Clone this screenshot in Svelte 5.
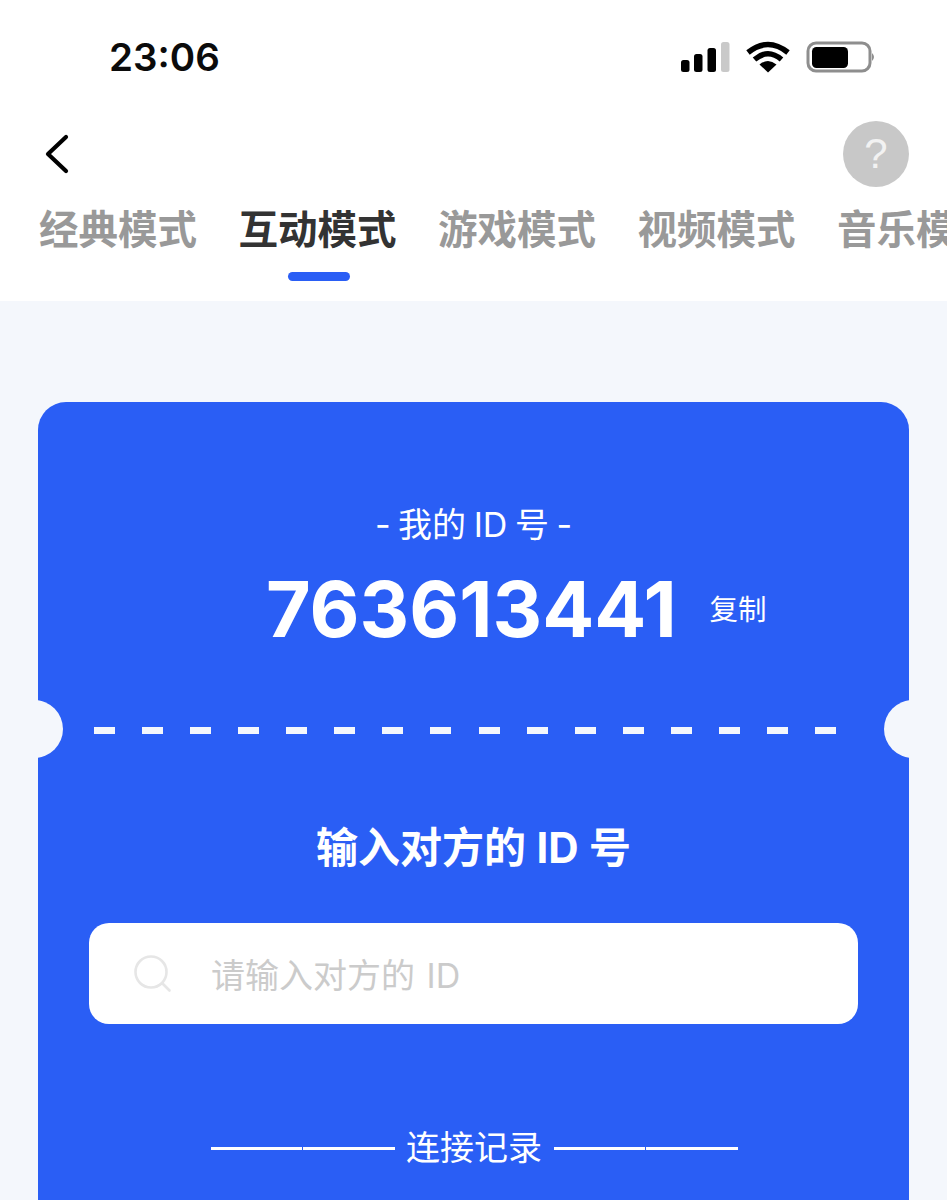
<script>
  const tabs = ['经典模式', '互动模式', '游戏模式', '视频模式', '音乐模式'];
  const active = 1;
</script>

<div class="page">
  <header class="head">
    <div class="status">
      <span class="time">23:06</span>
      <div class="sys">
        <svg class="signal" width="50" height="32" viewBox="0 0 50 32">
          <rect x="1" y="19" width="8.5" height="12" rx="2.5" fill="#000" />
          <rect x="14" y="13" width="8.5" height="18" rx="2.5" fill="#000" />
          <rect x="27.500" y="7" width="8.5" height="24" rx="2.5" fill="#000" />
          <rect x="41" y="1" width="8.5" height="30" rx="2.5" fill="#c9c9c9" />
        </svg>
        <svg class="wifi" width="46" height="32" viewBox="0 0 46 32">
          <path d="M23 31.500 L14.500 23.500 Q23 16.500 31.500 23.500 Z" fill="#000" />
          <path d="M9.500 18.500 Q23 7 36.500 18.500" fill="none" stroke="#000" stroke-width="5.5" />
          <path d="M3 11.500 Q23 -4.500 43 11.500" fill="none" stroke="#000" stroke-width="5.500" />
        </svg>
        <svg class="battery" width="70" height="32" viewBox="0 0 70 32">
          <rect x="2" y="2" width="62" height="28" rx="8" fill="none" stroke="#8e8e8e" stroke-width="3" />
          <rect x="6" y="6" width="36" height="21" rx="4.5" fill="#000" />
          <path d="M66 12 Q70 16 66 20 Z" fill="#8e8e8e" />
        </svg>
      </div>
    </div>
    <div class="nav">
      <svg class="back" width="28" height="40" viewBox="0 0 28 40">
        <path d="M24 3 L6 20 L24 37" fill="none" stroke="#000" stroke-width="4.2" stroke-linecap="round" stroke-linejoin="round" />
      </svg>
      <div class="help">?</div>
    </div>
    <div class="tabs">
      {#each tabs as tab, i}
        <div class="tab" class:on={i === active}>
          {tab}
          {#if i === active}<span class="bar"></span>{/if}
        </div>
      {/each}
    </div>
  </header>

  <main class="main">
    <section class="card">
      <span class="notch left"></span>
      <span class="notch right"></span>

      <div class="mine">
        <div class="mine-label">- 我的 ID 号 -</div>
        <div class="mine-id">
          <span class="num">763613441</span>
          <span class="copy">复制</span>
        </div>
      </div>

      <div class="dashes">
        {#each Array(16) as _}<i></i>{/each}
      </div>

      <h2 class="enter">输入对方的 ID 号</h2>

      <div class="input">
        <svg class="search" width="38" height="38" viewBox="0 0 38 38">
          <circle cx="17" cy="17" r="15.5" fill="none" stroke="#e6e6e6" stroke-width="2.6" />
          <path d="M29 29 L35.5 35.5" stroke="#e6e6e6" stroke-width="2.6" stroke-linecap="round" />
        </svg>
        <span class="ph">请输入对方的 ID</span>
      </div>

      <div class="rec">
        <span class="rule"><i></i><i></i></span>
        <span class="rec-text">连接记录</span>
        <span class="rule"><i></i><i></i></span>
      </div>
    </section>
  </main>
</div>

<style>
  :global(body) {
    margin: 0;
    background: #f4f7fc;
  }
  .page {
    width: 947px;
    height: 1200px;
    overflow: hidden;
    background: #f4f7fc;
    font-family: "Inter", "Noto Sans CJK SC", sans-serif;
  }
  .head {
    height: 301px;
    background: #fff;
    overflow: hidden;
  }
  .status {
    height: 114px;
    display: flex;
    justify-content: space-between;
    align-items: center;
    padding: 0 71px 0 109px;
  }
  .time {
    font-size: 38.5px;
    font-weight: 600;
    color: #0b0b0b;
    line-height: 1;
  }
  .sys {
    display: flex;
    align-items: center;
    gap: 15px;
  }
  .nav {
    height: 80px;
    display: flex;
    justify-content: space-between;
    align-items: center;
    padding: 0 38px 0 42px;
  }
  .help {
    width: 66px;
    height: 66px;
    border-radius: 50%;
    background: #c8c8c8;
    color: #f2f2f2;
    font-size: 42px;
    font-family: "Liberation Sans", sans-serif;
    display: flex;
    align-items: center;
    justify-content: center;
  }
  .tabs {
    display: flex;
    gap: 39.5px;
    padding-left: 39px;
    white-space: nowrap;
    height: 90px;
  }
  .tab {
    position: relative;
    flex: none;
    width: 160px;
    font-size: 39.5px;
    line-height: 72px;
    font-weight: 700;
    color: #999;
    height: 90px;
  }
  .tab.on {
    color: #333;
  }
  .bar {
    position: absolute;
    left: 49px;
    top: 78px;
    width: 62px;
    height: 9px;
    border-radius: 5px;
    background: #2a5ef5;
  }
  .main {
    padding: 101px 38px 0;
  }
  .card {
    position: relative;
    height: 900px;
    background: #2a5ef5;
    border-radius: 28px 28px 0 0;
    color: #fff;
    overflow: hidden;
  }
  .notch {
    position: absolute;
    top: 298px;
    width: 58px;
    height: 58px;
    border-radius: 50%;
    background: #f4f7fc;
  }
  .notch.left {
    left: -33px;
  }
  .notch.right {
    right: -33px;
  }
  .mine {
    padding-top: 100px;
    text-align: center;
  }
  .mine-label {
    font-size: 34px;
    line-height: 46px;
    word-spacing: -2px;
  }
  .mine-id {
    display: flex;
    align-items: center;
    height: 90px;
    margin-top: 16px;
    padding-left: 228px;
  }
  .num {
    font-size: 77px;
    font-weight: 700;
    line-height: 90px;
  }
  .copy {
    font-size: 28.5px;
    margin-left: 33px;
    line-height: 40px;
    margin-top: 2px;
  }
  .dashes {
    display: flex;
    justify-content: space-between;
    margin: 73px 73px 0 56px;
    height: 7px;
  }
  .dashes i {
    width: 21px;
    height: 7px;
    background: #f4f7fc;
  }
  .enter {
    margin: 86px 0 0;
    font-size: 42px;
    line-height: 56px;
    font-weight: 700;
    text-align: center;
    word-spacing: 0.5px;
  }
  .input {
    margin: 47px 51px 0;
    height: 101px;
    border-radius: 20px;
    background: #fff;
    display: flex;
    align-items: center;
    padding-left: 45px;
  }
  .ph {
    margin-left: 39px;
    font-size: 34px;
    color: #cbcbcb;
    word-spacing: 2px;
  }
  .rec {
    margin-top: 100px;
    display: flex;
    justify-content: center;
    align-items: center;
    gap: 11.500px;
    padding-left: 1px;
  }
  .rec-text {
    font-size: 34px;
    line-height: 48px;
  }
  .rule {
    display: flex;
    gap: 1px;
  }
  .rule i {
    width: 91.500px;
    height: 3px;
    background: #fff;
  }
</style>
